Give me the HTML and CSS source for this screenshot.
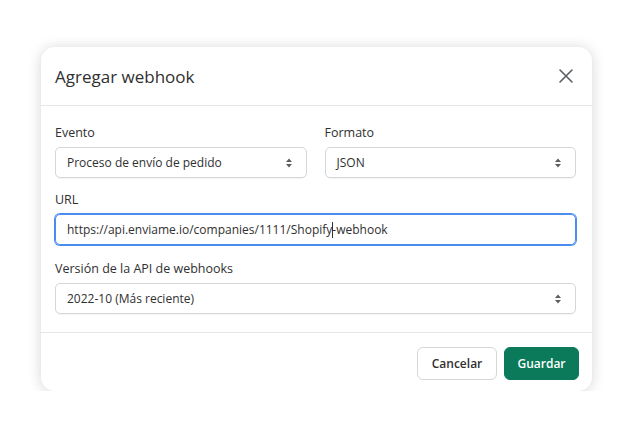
FILE: index.html
```html
<!DOCTYPE html>
<html lang="es">
<head>
  <meta charset="UTF-8">
  <meta name="viewport" content="width=device-width, initial-scale=1.0">
  <title>Agregar webhook</title>
  <link rel="stylesheet" href="styles.css">
</head>
<body>

<div class="modal">
  <div class="modal-header">
    <h2>Agregar webhook</h2>
    <button class="close-btn" aria-label="Cerrar">
      <svg width="16" height="16" viewBox="0 0 16 16"><path d="M2 2L14 14M14 2L2 14" stroke="#5c5f62" stroke-width="1.6" stroke-linecap="round"/></svg>
    </button>
  </div>

  <div class="modal-body">
    <div class="row two">
      <div class="field">
        <label>Evento</label>
        <div class="select">
          <span>Proceso de envío de pedido</span>
          <svg class="arrows" width="8" height="12" viewBox="0 0 8 12"><path d="M4 1.5L7 5H1Z M4 10.5L1 7H7Z" fill="#5c5f62"/></svg>
        </div>
      </div>
      <div class="field">
        <label>Formato</label>
        <div class="select">
          <span>JSON</span>
          <svg class="arrows" width="8" height="12" viewBox="0 0 8 12"><path d="M4 1.5L7 5H1Z M4 10.5L1 7H7Z" fill="#5c5f62"/></svg>
        </div>
      </div>
    </div>

    <div class="row">
      <div class="field">
        <label>URL</label>
        <div class="input focused">https://api.enviame.io/companies/1111/Shopify<span class="caret"></span>-webhook</div>
      </div>
    </div>

    <div class="row after-focus">
      <div class="field">
        <label>Versión de la API de webhooks</label>
        <div class="select">
          <span>2022-10 (Más reciente)</span>
          <svg class="arrows" width="8" height="12" viewBox="0 0 8 12"><path d="M4 1.5L7 5H1Z M4 10.5L1 7H7Z" fill="#5c5f62"/></svg>
        </div>
      </div>
    </div>
  </div>

  <div class="modal-footer">
    <button class="btn cancel">Cancelar</button>
    <button class="btn primary">Guardar</button>
  </div>
</div>

</body>
</html>
```

FILE: styles.css
```css
body {
  margin: 0;
  background: #fff;
  font-family: "Open Sans", Arial, sans-serif;
  color: #303030;
}
.modal {
  width: 551px;
  margin: 47px 0 0 41px;
  background: #fff;
  border-radius: 14px;
  box-shadow: 0 1px 14px rgba(0, 0, 0, 0.17);
}
.modal-header {
  height: 58px;
  padding: 0 16px 0 14px;
  display: flex;
  align-items: center;
  justify-content: space-between;
  border-bottom: 1px solid #e6e6e6;
}
.modal-header h2 {
  margin: 0;
  font-size: 17px;
  font-weight: 400;
  color: #303030;
}
.close-btn {
  width: 20px;
  height: 20px;
  padding: 0;
  border: none;
  background: none;
  display: flex;
  align-items: center;
  justify-content: center;
}
.modal-body {
  padding: 17px 16px 18px 14px;
  border-bottom: 1px solid #e6e6e6;
}
.row + .row {
  margin-top: 12px;
}
.row.after-focus {
  margin-top: 14px;
}
.row.two {
  display: grid;
  grid-template-columns: 1fr 1fr;
  column-gap: 18px;
}
.field label {
  display: block;
  font-size: 12.5px;
  line-height: 20px;
  margin-bottom: 4px;
}
.select,
.input {
  height: 31px;
  box-sizing: border-box;
  border: 1px solid #d4d6d8;
  border-radius: 5px;
  padding: 0 13px 0 11px;
  display: flex;
  align-items: center;
  font-size: 12px;
  color: #303030;
  box-shadow: 0 1px 0 rgba(0, 0, 0, 0.04);
}
.select span {
  flex: 1;
}
.input.focused {
  border-color: #4a8cf0;
  box-shadow: 0 0 0 1px #4a8cf0;
}
.caret {
  display: inline-block;
  width: 1px;
  height: 16px;
  margin-right: -1px;
  background: #303030;
}
.modal-footer {
  padding: 14px 13px 11px;
  display: flex;
  justify-content: flex-end;
  gap: 7px;
}
.btn {
  height: 33px;
  width: 75px;
  padding: 0;
  border: 1px solid #d4d6d8;
  border-radius: 6px;
  background: #fff;
  font-family: "Open Sans", Arial, sans-serif;
  font-size: 12px;
  font-weight: 600;
  color: #303030;
}
.btn.cancel {
  width: 80px;
}
.btn.primary {
  background: #0a7a5a;
  border-color: #0a7a5a;
  color: #fff;
}
```
